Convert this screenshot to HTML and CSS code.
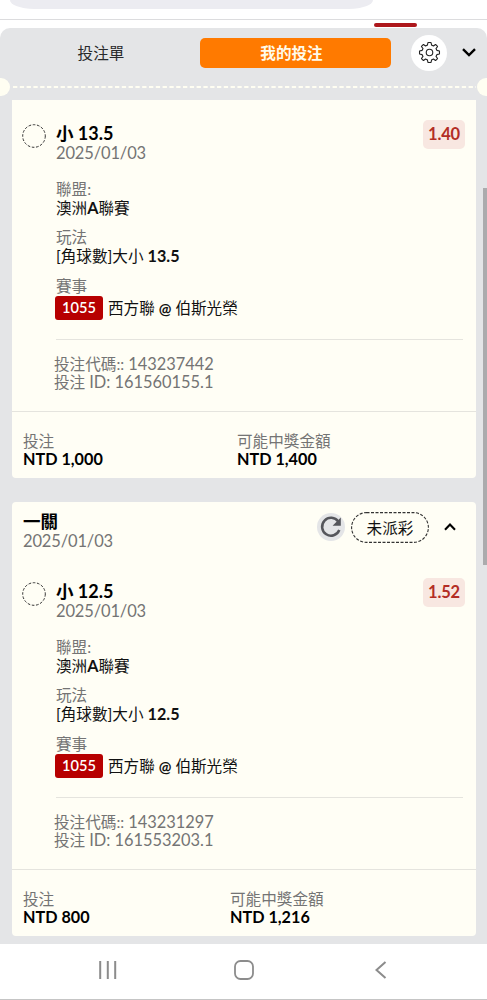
FILE: index.html
```
<!DOCTYPE html>
<html lang="zh-Hant">
<head>
<meta charset="utf-8">
<title>我的投注</title>
<link rel="stylesheet" href="styles.css">
</head>
<body>
<div class="browser"><div class="address"></div><div class="indicator"></div></div>
<main class="panel">
  <header class="tabs">
    <div class="tab">投注單</div>
    <div class="tab active">我的投注</div>
    <div class="gear"><svg width="23" height="23" viewBox="-12 -12 24 24" fill="none" stroke="#222" stroke-width="1.15" stroke-linejoin="round"><path d="M-1.6 -10.4H1.6L2.2 -7.7Q3.2 -7.4 4.1 -6.8L6.3 -8.4L8.4 -6.3L6.8 -4.1Q7.4 -3.2 7.7 -2.2L10.4 -1.6V1.6L7.7 2.2Q7.4 3.2 6.8 4.1L8.4 6.3L6.3 8.4L4.1 6.8Q3.2 7.4 2.2 7.7L1.6 10.4H-1.6L-2.2 7.7Q-3.2 7.4 -4.1 6.8L-6.3 8.4L-8.4 6.3L-6.8 4.1Q-7.4 3.2 -7.7 2.2L-10.4 1.6V-1.6L-7.7 -2.2Q-7.4 -3.2 -6.8 -4.1L-8.4 -6.3L-6.3 -8.4L-4.1 -6.8Q-3.2 -7.4 -2.2 -7.7Z"/><circle r="3.4"/></svg></div>
    <svg class="down" width="14" height="9" viewBox="0 0 14 9" fill="none" stroke="#000" stroke-width="2.4"><path d="M1 1.2L7 7L13 1.2"/></svg>
  </header>
  <div class="tear"><i></i><svg width="467" height="2" viewBox="0 0 467 2"><path d="M3 1H466" stroke="#fffef2" stroke-width="2" stroke-dasharray="4.3 2.5"/></svg><i class="right"></i></div>

  <section class="card first">
    <div class="bet">
      <div class="ring"><svg width="24" height="24"><circle cx="12" cy="12" r="11.3" fill="none" stroke="#333" stroke-dasharray="2.7 1.6"/></svg></div>
      <div class="detail">
        <div class="pick">小 <span class="num">13.5</span></div>
        <div class="date">2025/01/03</div>
        <div class="odds">1.40</div>
        <dl>
          <dt>聯盟:</dt><dd>澳洲<b>A</b>聯賽</dd>
          <dt>玩法</dt><dd>[角球數]大小 <b>13.5</b></dd>
          <dt>賽事</dt><dd class="match"><span class="badge">1055</span><span>西方聯 <span class="at">@</span> 伯斯光榮</span></dd>
        </dl>
        <div class="codes">
          <div>投注代碼:: <span class="num">143237442</span></div>
          <div>投注 <span class="num">ID: 161560155.1</span></div>
        </div>
      </div>
    </div>
    <footer class="totals">
      <div class="stake"><div class="label">投注</div><div class="sum">NTD 1,000</div></div>
      <div><div class="label">可能中獎金額</div><div class="sum">NTD 1,400</div></div>
    </footer>
  </section>

  <section class="card">
    <header class="head">
      <div class="headtext"><div class="title">一關</div><div class="date">2025/01/03</div></div>
      <div class="refresh"><svg width="28" height="28" viewBox="0 0 28 28" fill="none" stroke="#55565b" stroke-width="2.5"><path d="M21.3 8.6A8.9 8.9 0 1 0 22.3 17"/><path d="M23.8 4.5V12.8H15.6Z" fill="#55565b" stroke="none"/></svg></div>
      <div class="status"><svg width="78" height="31"><rect x=".6" y=".6" width="76.8" height="29.8" rx="14.9" fill="none" stroke="#333" stroke-width="1.1" stroke-dasharray="3 1.5"/></svg><span>未派彩</span></div>
      <svg class="up" width="12" height="8" viewBox="0 0 12 8" fill="none" stroke="#000" stroke-width="2.1"><path d="M1 6.8L6 1.6L11 6.8"/></svg>
    </header>
    <div class="bet">
      <div class="ring"><svg width="24" height="24"><circle cx="12" cy="12" r="11.3" fill="none" stroke="#333" stroke-dasharray="2.7 1.6"/></svg></div>
      <div class="detail">
        <div class="pick">小 <span class="num">12.5</span></div>
        <div class="date">2025/01/03</div>
        <div class="odds">1.52</div>
        <dl>
          <dt>聯盟:</dt><dd>澳洲<b>A</b>聯賽</dd>
          <dt>玩法</dt><dd>[角球數]大小 <b>12.5</b></dd>
          <dt>賽事</dt><dd class="match"><span class="badge">1055</span><span>西方聯 <span class="at">@</span> 伯斯光榮</span></dd>
        </dl>
        <div class="codes">
          <div>投注代碼:: <span class="num">143231297</span></div>
          <div>投注 <span class="num">ID: 161553203.1</span></div>
        </div>
      </div>
    </div>
    <footer class="totals narrow">
      <div class="stake"><div class="label">投注</div><div class="sum">NTD 800</div></div>
      <div><div class="label">可能中獎金額</div><div class="sum">NTD 1,216</div></div>
    </footer>
  </section>
  <div class="scrollbar"></div>
</main>
<nav class="system">
  <svg width="18" height="18" viewBox="0 0 18 18" stroke="#8c8c8c" stroke-width="2"><path d="M1.2 0V18M8.8 0V18M16.2 0V18"/></svg>
  <svg class="home" width="20" height="20" viewBox="0 0 20 20" fill="none" stroke="#8c8c8c" stroke-width="1.8"><rect x="1" y="1" width="18" height="18" rx="5.5"/></svg>
  <svg width="12" height="18" viewBox="0 0 12 18" fill="none" stroke="#8c8c8c" stroke-width="2"><path d="M10.5 1L1.5 9L10.5 17"/></svg>
</nav>
</body>
</html>
```
FILE: styles.css
```
* { box-sizing: border-box; }
body {
  margin: 0; width: 487px; height: 1000px; overflow: hidden;
  display: flex; flex-direction: column; background: #fff; color: #111;
  font: 15.6px/18px Lato, "Noto Sans CJK TC", sans-serif; white-space: nowrap;
}
svg { display: block; flex: none; }
.browser { height: 28px; flex: none; background: linear-gradient(#dcdcde, #dcdcde) 0 19px / 100% 1px no-repeat; }
.address { width: 363px; height: 9px; margin-left: 10px; border-radius: 0 0 24px 24px / 0 0 9px 9px; background: #ececf1; }
.indicator { width: 43px; height: 4px; margin: 14px 0 0 374px; border-radius: 2px; background: #ad171c; }
.panel { position: relative; height: 916px; flex: none; background: #e4e5e7; border-radius: 10px 10px 0 0; }
.tabs { display: flex; align-items: center; height: 49px; padding-left: 10px; }
.tab { width: 182px; text-align: center; line-height: 30px; color: #28292b; }
.tab.active { width: 191px; height: 30px; margin-left: 8px; padding-right: 8px; border-radius: 5px; background: #ff7a00; color: #fffbea; font-weight: 700; }
.gear { display: grid; place-items: center; width: 36px; height: 36px; margin-left: 20px; border-radius: 50%; background: #fff; }
.down { margin-left: 15px; }
.tear { display: flex; align-items: center; height: 20px; overflow: hidden; justify-content: space-between; }
.tear i { width: 10px; height: 18px; margin-top: -1px; border-radius: 0 9px 9px 0; background: #fffef2; }
.tear i.right { border-radius: 9px 0 0 9px; }
.card { width: 464px; margin: 24px 0 0 12px; border-radius: 4px; background: #fffef5; }
.card.first { margin-top: 3px; padding-top: 20px; border-radius: 0 0 4px 4px; }
.bet { display: flex; height: 291px; padding: 0 13px 0 11px; }
.ring { width: 33px; padding-top: 4px; }
.ring svg { margin-left: -1px; }
.detail { position: relative; flex: 1; }
.pick { height: 24px; line-height: 26px; font-size: 17.5px; font-weight: 700; color: #000; }
.num { font-size: 16.4px; }
.date { font-size: 16.5px; letter-spacing: -.15px; }
.pick .num { font-size: 18px; }
.date { line-height: 18px; color: #747474; }
.odds { position: absolute; right: -2px; top: 0; width: 42px; height: 29px; border-radius: 5px; background: #f8e7e1; color: #b32d25; line-height: 29px; text-align: center; font-size: 16.5px; letter-spacing: -.15px; font-weight: 700; }
dl { height: 160px; margin: 18px 0 0; border-bottom: 1px solid #e5e4de; }
dt { line-height: 18px; color: #747474; }
dd { margin: 0 0 10.4px; line-height: 20px; color: #111; }
dd b { font-size: 16.2px; }
.at { font-weight: 700; font-size: 15px; }
.match { display: flex; gap: 5px; line-height: 24px; margin-top: 1px; }
.badge { width: 48px; height: 24px; margin-left: -1px; border-radius: 3px; background: #b70000; color: #fff; text-align: center; font-weight: 600; font-size: 14.6px; }
.codes { margin: 15.4px 0 0 -2px; color: #747474; }
.totals { display: flex; height: 67px; padding: 20px 0 0 11px; border-top: 1px solid #e5e4de; }
.stake { width: 214px; }
.narrow .stake { width: 207px; }
.label { color: #747474; }
.sum { font-size: 16.2px; font-weight: 700; color: #000; }
.head { display: flex; height: 76px; padding: 9px 20px 0 11px; }
.headtext { flex: 1; }
.title { line-height: 21px; font-size: 17.5px; font-weight: 700; color: #000; }
.refresh { width: 28px; height: 28px; margin-top: 2px; border-radius: 50%; background: #e4e5e7; }
.status { display: grid; width: 78px; height: 31px; margin: 1px 15px 0 6px; place-items: center; }
.status > * { grid-area: 1 / 1; }
.up { margin-top: 12px; }
.scrollbar { position: absolute; right: 0; top: 160px; width: 4px; height: 377px; background: #ababad; }
.system { display: flex; align-items: center; flex: none; height: 56px; padding: 0 100px 3px 99px; justify-content: space-between; border-bottom: 1px solid #c5c5c5; }
.system .home { margin-left: -5px; }
```
